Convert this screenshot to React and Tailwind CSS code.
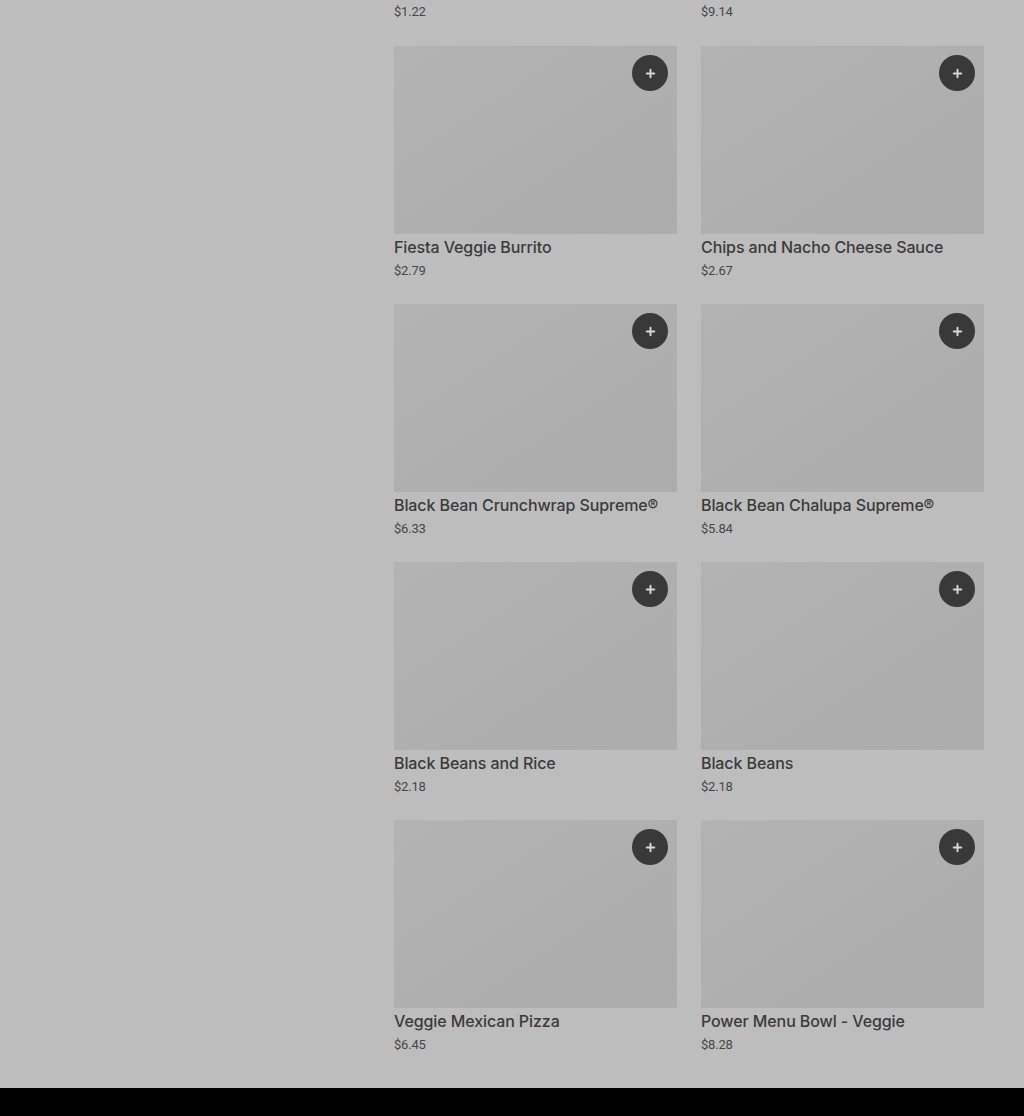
import { Plus } from 'lucide-react'

const ITEMS = [
  { name: 'Fiesta Veggie Burrito', price: '$2.79' },
  { name: 'Chips and Nacho Cheese Sauce', price: '$2.67' },
  { name: 'Black Bean Crunchwrap Supreme®', price: '$6.33' },
  { name: 'Black Bean Chalupa Supreme®', price: '$5.84' },
  { name: 'Black Beans and Rice', price: '$2.18' },
  { name: 'Black Beans', price: '$2.18' },
  { name: 'Veggie Mexican Pizza', price: '$6.45' },
  { name: 'Power Menu Bowl - Veggie', price: '$8.28' },
]

function ItemCard({ name, price }) {
  return (
    <div className="flex flex-col">
      <div className="relative h-[188px] bg-gradient-to-br from-[#b3b3b3] via-[#afafaf] to-[#adadad]">
        <button className="absolute top-[9px] right-[9px] w-9 h-9 rounded-full bg-[#393939] flex items-center justify-center">
          <Plus className="w-[13px] h-[13px] text-[#d6d6d6]" strokeWidth={3.6} />
        </button>
      </div>
      <p className="mt-[3px] text-[16px] leading-[20px] font-medium text-[#3b3b3b] tracking-[-0.1px]" style={{ fontFamily: 'Inter, Roboto, sans-serif' }}>{name}</p>
      <p className="mt-[5px] text-[13px] leading-[18px] text-[#474747] tracking-[-0.2px]">{price}</p>
    </div>
  )
}

export default function App() {
  return (
    <div className="w-[1024px] h-[1116px] bg-[#bdbdbd] flex flex-col overflow-hidden" style={{ fontFamily: 'Roboto, "Noto Sans", sans-serif' }}>
      <div className="flex flex-1">
        <div className="w-[394px] shrink-0" />
        <div className="w-[590px]">
          <div className="grid grid-cols-2 gap-x-6 pt-[3px] h-[46px]">
            <p className="text-[13px] leading-[18px] text-[#474747] tracking-[-0.2px]">$1.22</p>
            <p className="text-[13px] leading-[18px] text-[#474747] tracking-[-0.2px]">$9.14</p>
          </div>
          <div className="grid grid-cols-2 gap-x-6 gap-y-[24px]">
            {ITEMS.map(item => (
              <ItemCard key={item.name} {...item} />
            ))}
          </div>
        </div>
      </div>
      <div className="h-[28px] bg-black shrink-0" />
    </div>
  )
}
